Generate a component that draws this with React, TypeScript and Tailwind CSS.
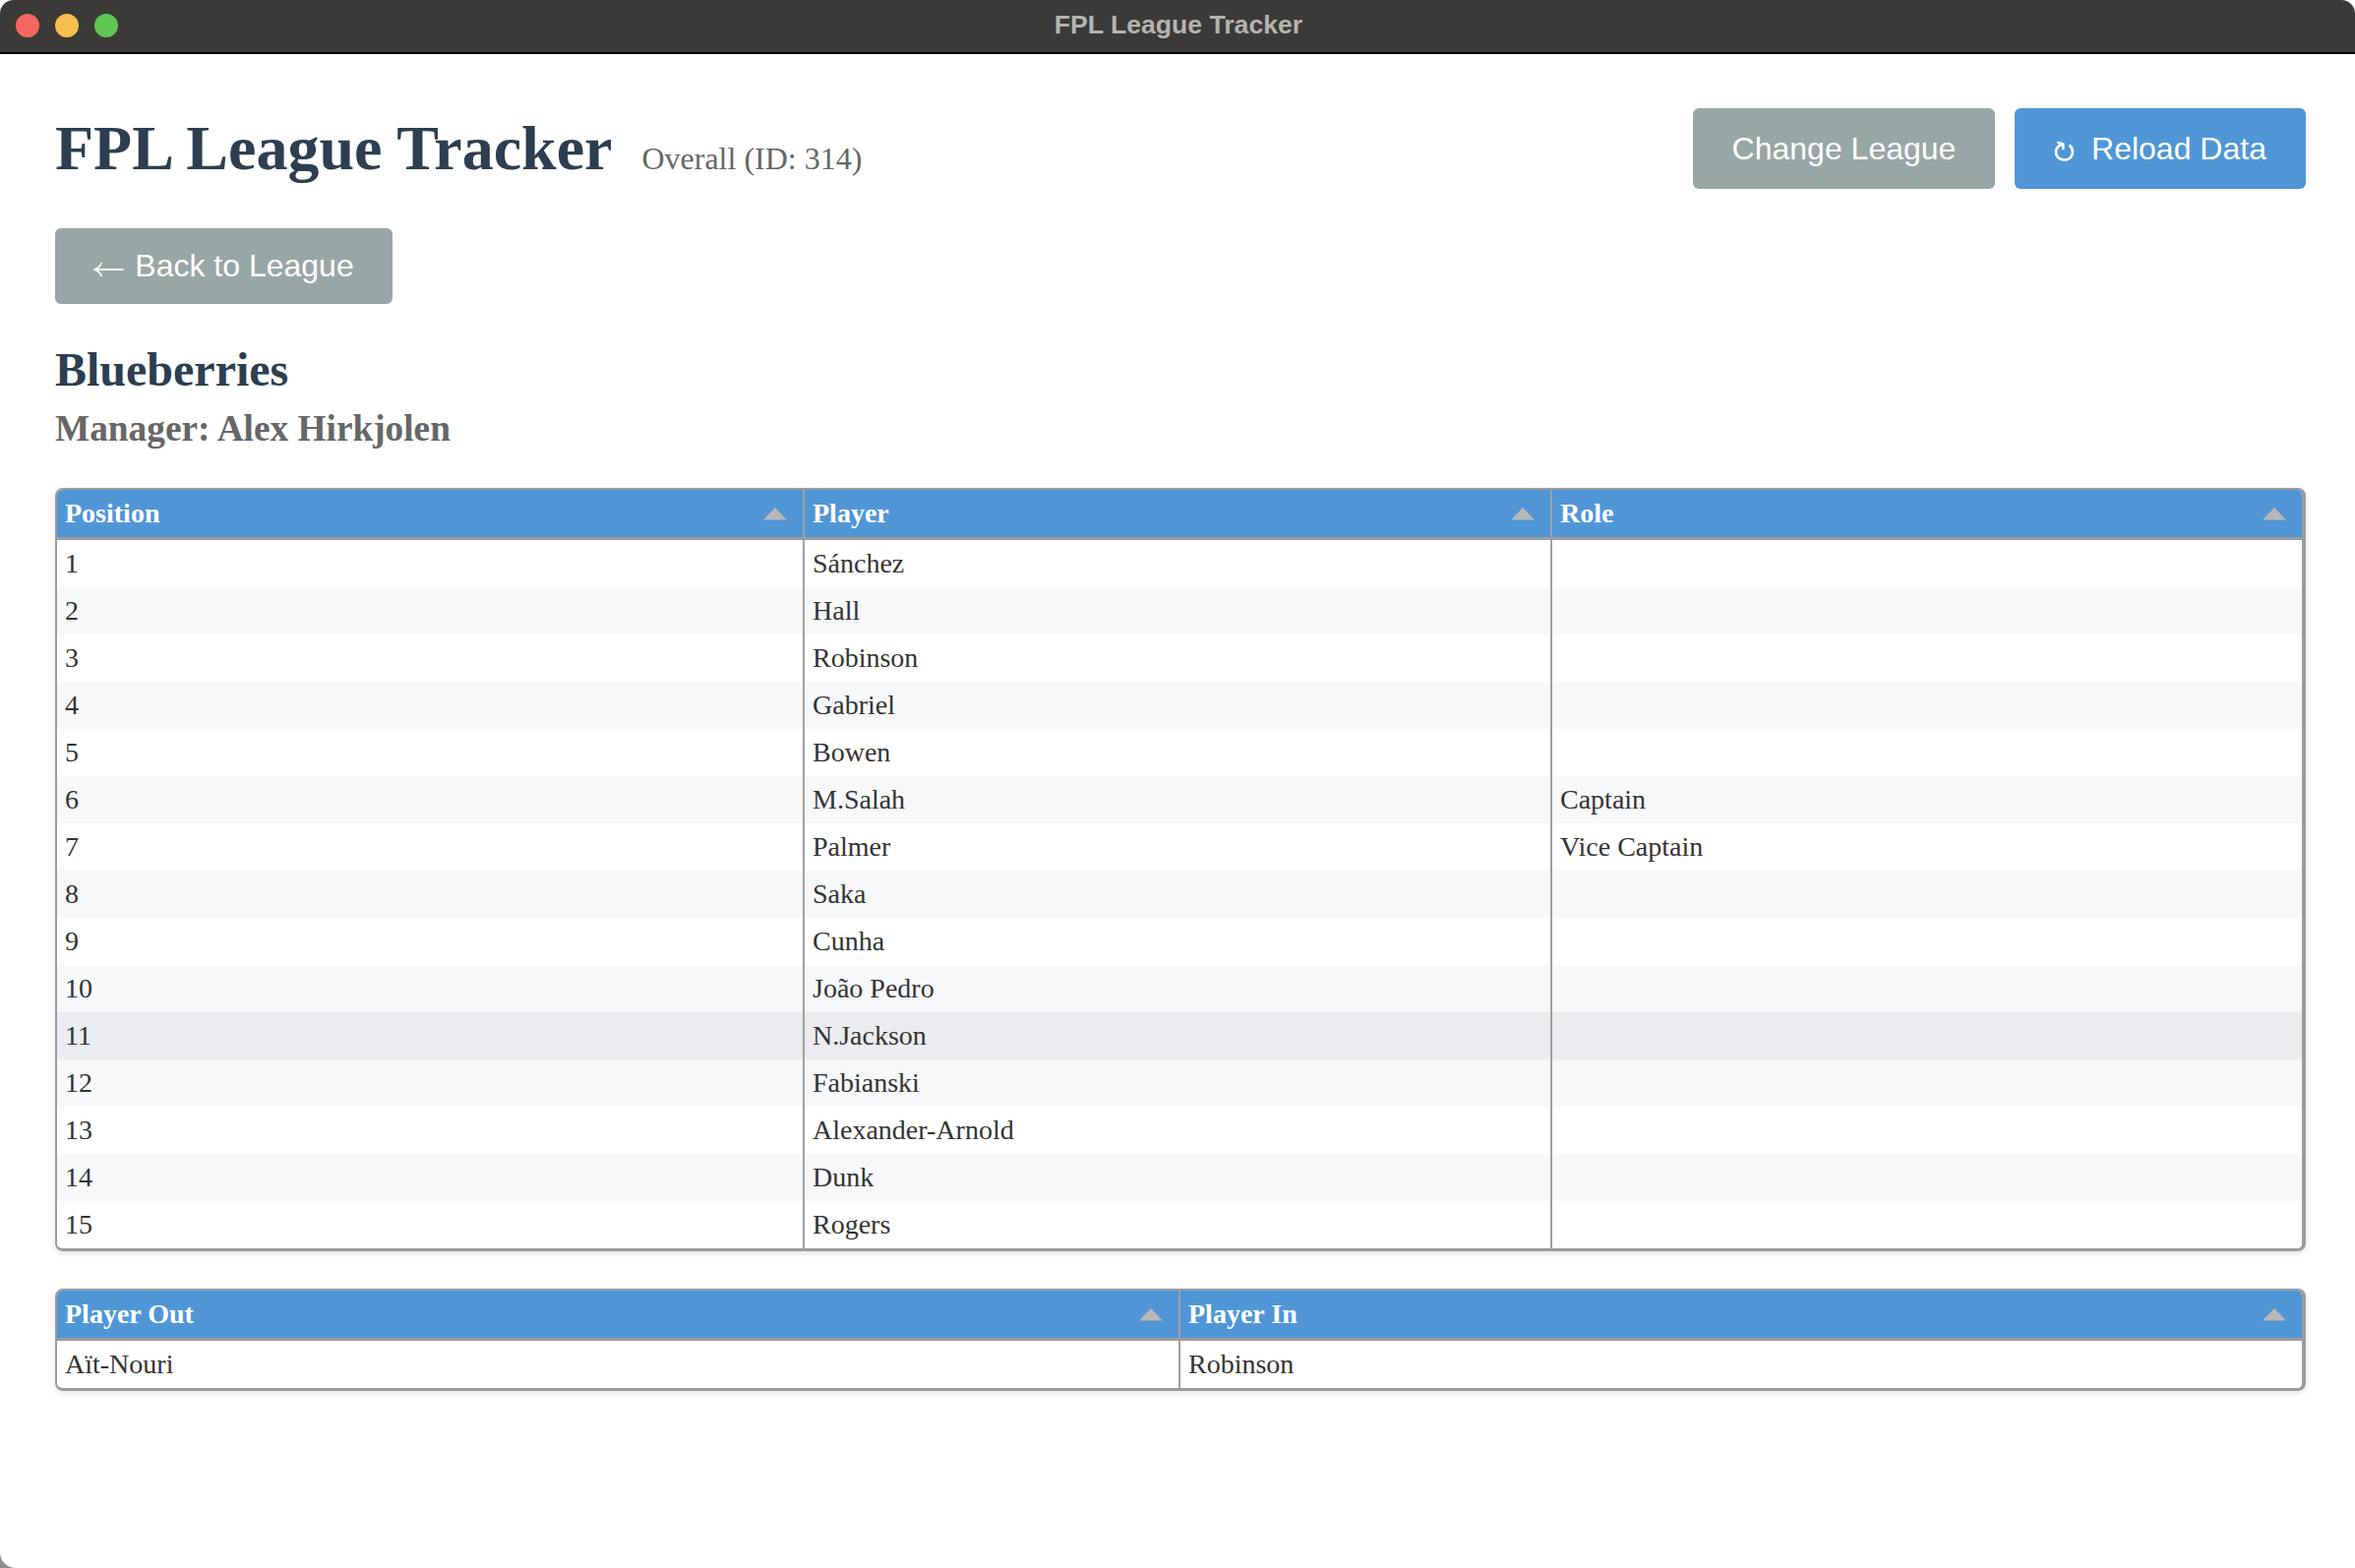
const serif = "font-['Liberation_Serif',serif]";

function Caret() {
  return (
    <svg width="24" height="13" viewBox="0 0 24 13" className="block shrink-0">
      <polygon points="12,0 24,12.5 0,12.5" fill="#b8b8b8" />
    </svg>
  );
}

function Th({ label, last }: { label: string; last?: boolean }) {
  return (
    <th className={`h-[48px] p-0 bg-[#5096d6] text-left font-bold text-white text-[28px] ${last ? "" : "border-r-2 border-r-[#a0a0a0]"}`}>
      <div className="flex items-center justify-between pl-[8px] pr-[16px]">
        <span className="leading-[48px]">{label}</span>
        <Caret />
      </div>
    </th>
  );
}

function Td({ children, last, bg }: { children?: React.ReactNode; last?: boolean; bg: string }) {
  return (
    <td className={`h-[48px] p-0 pl-[8px] text-[28px] leading-[48px] text-[#333333] ${bg} ${last ? "" : "border-r-2 border-r-[#a0a0a0]"}`}>
      {children}
    </td>
  );
}

const players: [string, string][] = [
  ["Sánchez", ""],
  ["Hall", ""],
  ["Robinson", ""],
  ["Gabriel", ""],
  ["Bowen", ""],
  ["M.Salah", "Captain"],
  ["Palmer", "Vice Captain"],
  ["Saka", ""],
  ["Cunha", ""],
  ["João Pedro", ""],
  ["N.Jackson", ""],
  ["Fabianski", ""],
  ["Alexander-Arnold", ""],
  ["Dunk", ""],
  ["Rogers", ""],
];

function rowBg(i: number) {
  if (i === 10) return "bg-[#ebecef]";
  return i % 2 === 1 ? "bg-[#f7f8fa]" : "bg-white";
}

function ReloadIcon() {
  return (
    <svg width="22" height="22" viewBox="0 0 22 22" className="block shrink-0 mt-[6px]" fill="none" stroke="white" strokeWidth="2.6">
      <path d="M9 3.4 C 3.8 5 1.8 8.2 2 12 C 2.2 16.6 6 19.6 10.6 19.6 C 15.4 19.6 19 16.4 19 11.6 C 19 8.6 17.8 6.4 15.6 4.6" />
      <polyline points="3.4,1.6 9.4,3.4 9.4,9.2" strokeWidth="2.4" />
    </svg>
  );
}

function BackArrow() {
  return (
    <svg width="31" height="16" viewBox="0 0 31 16" className="block shrink-0 mt-[6px]" fill="none" stroke="white">
      <path d="M1.5 8 H30.5" strokeWidth="1.8" />
      <path d="M8.5 1 C 7 4.5 4.5 6.8 1 8 C 4.5 9.2 7 11.5 8.5 15" strokeWidth="1.8" />
    </svg>
  );
}

export default function App() {
  return (
    <div className="flex h-[1594px] w-[2394px] flex-col overflow-hidden bg-white">
      <div className="relative flex h-[55px] shrink-0 items-center rounded-t-[14px] border-b-2 border-b-black bg-[#3b3a38]">
        <div className="flex gap-[16px] pb-[1px] pl-[16px]">
          <span className="h-[24px] w-[24px] rounded-full bg-[#f2685f]" />
          <span className="h-[24px] w-[24px] rounded-full bg-[#f6be4f]" />
          <span className="h-[24px] w-[24px] rounded-full bg-[#61c554]" />
        </div>
        <div className="absolute inset-0 flex items-center justify-center pb-[2px] pl-[2px] font-['Liberation_Sans',sans-serif] text-[26.6px] font-bold text-[#b4b3b1]">
          FPL League Tracker
        </div>
      </div>

      <div className="min-h-0 flex-1 bg-[#8f8f8f]">
        <div className="h-full rounded-bl-[16px] bg-white pl-[56px] pr-[50px] pt-[55px]">
          <div className="flex items-start justify-between">
            <div className={`flex items-baseline gap-[30px] ${serif}`}>
              <h1 className="text-[64px] font-bold leading-[82px] text-[#2c3e50]">FPL League Tracker</h1>
              <span className="text-[32px] text-[#666666]">Overall (ID: 314)</span>
            </div>
            <div className="flex gap-[20px] font-['Liberation_Sans',sans-serif] text-[32px] text-white">
              <button className="h-[82px] w-[307px] rounded-[6px] bg-[#99a6a6]">Change League</button>
              <button className="flex h-[82px] w-[296px] items-center justify-center gap-[16px] rounded-[6px] bg-[#5096d6]">
                <ReloadIcon />
                <span>Reload Data</span>
              </button>
            </div>
          </div>

          <button className="mt-[40px] flex h-[77px] w-[343px] items-center justify-center gap-[11px] rounded-[6px] bg-[#99a6a6] font-['Liberation_Sans',sans-serif] text-[32px] text-white">
            <BackArrow />
            <span className="-translate-y-[1px]">Back to League</span>
          </button>

          <div className={serif}>
            <h2 className="mt-[37px] text-[48px] font-bold leading-[60px] text-[#2c3e50]">Blueberries</h2>
            <h3 className="mt-[2px] text-[37.3px] font-bold leading-[56px] text-[#666666]">Manager: Alex Hirkjolen</h3>

            <div className="mt-[32px] w-[2288px] overflow-hidden rounded-[8px] border-[2px] border-r-[4px] border-b-[3px] border-[#9b9b9b] shadow-[0_2px_6px_rgba(0,0,0,0.12)]">
              <table className="w-full table-fixed border-collapse">
                <colgroup>
                  <col className="w-[759px]" />
                  <col className="w-[760px]" />
                  <col />
                </colgroup>
                <thead className="border-b-[3px] border-b-[#9b9b9b]">
                  <tr>
                    <Th label="Position" />
                    <Th label="Player" />
                    <Th label="Role" last />
                  </tr>
                </thead>
                <tbody>
                  {players.map(([name, role], i) => (
                    <tr key={name}>
                      <Td bg={rowBg(i)}>{i + 1}</Td>
                      <Td bg={rowBg(i)}>{name}</Td>
                      <Td bg={rowBg(i)} last>{role}</Td>
                    </tr>
                  ))}
                </tbody>
              </table>
            </div>

            <div className="mt-[38px] w-[2288px] overflow-hidden rounded-[8px] border-[2px] border-r-[4px] border-b-[3px] border-[#9b9b9b] shadow-[0_2px_6px_rgba(0,0,0,0.12)]">
              <table className="w-full table-fixed border-collapse">
                <colgroup>
                  <col className="w-[1141px]" />
                  <col />
                </colgroup>
                <thead className="border-b-[3px] border-b-[#9b9b9b]">
                  <tr>
                    <Th label="Player Out" />
                    <Th label="Player In" last />
                  </tr>
                </thead>
                <tbody>
                  <tr>
                    <Td bg="bg-white">Aït-Nouri</Td>
                    <Td bg="bg-white" last>Robinson</Td>
                  </tr>
                </tbody>
              </table>
            </div>
          </div>
        </div>
      </div>
    </div>
  );
}
